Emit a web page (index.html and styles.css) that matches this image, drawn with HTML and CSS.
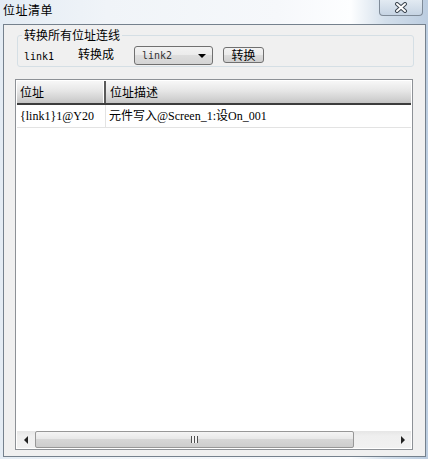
FILE: index.html
```html
<!DOCTYPE html>
<html lang="zh">
<head>
    <meta charset="UTF-8">
    <title>位址清单</title>
    <link rel="stylesheet" href="styles.css">
</head>
<body>
    <div class="window">
        <div class="titlebar">
            <span class="title">位址清单</span>
            <span class="close">
                <svg width="14" height="11" viewBox="0 0 14 11">
                    <path d="M3 2 L11 9 M11 2 L3 9" stroke="#3c4650" stroke-width="4" stroke-linecap="round"/>
                    <path d="M3 2 L11 9 M11 2 L3 9" stroke="#ffffff" stroke-width="2" stroke-linecap="round"/>
                </svg>
            </span>
        </div>
        <div class="frame">
            <fieldset class="group">
                <legend>转换所有位址连线</legend>
                <div class="convert">
                    <span class="from">link1</span>
                    <span class="to-label">转换成</span>
                    <div class="select">
                        <span class="select-text">link2</span>
                        <span class="select-arrow"></span>
                    </div>
                    <button class="btn">转换</button>
                </div>
            </fieldset>
            <div class="list">
                <div class="head">
                    <div class="hcol c1">位址</div>
                    <div class="hcol c2">位址描述</div>
                </div>
                <div class="row">
                    <div class="cell c1">{link1}1@Y20</div>
                    <div class="cell c2">元件写入@Screen_1:设On_001</div>
                </div>
                <div class="fill"></div>
                <div class="hscroll">
                    <span class="sbtn"><span class="tri-left"></span></span>
                    <div class="thumb"><span class="grip"></span></div>
                    <div class="track"></div>
                    <span class="sbtn"><span class="tri-right"></span></span>
                </div>
            </div>
        </div>
    </div>
</body>
</html>
```

FILE: styles.css
```css
* {
    box-sizing: border-box;
}
body {
    margin: 0;
    font-family: "Noto Sans CJK SC", "Liberation Sans", sans-serif;
    font-size: 12px;
    color: #000;
}
.window {
    width: 428px;
    height: 459px;
    overflow: hidden;
    background: linear-gradient(to right, #e4ecf4 0%, #f0f4f8 25%, #f6f8fb 65%, #fdfeff 82%, #d3dfeb 90%, #bccde0 100%);
}
.titlebar {
    height: 24px;
    display: flex;
    justify-content: space-between;
    align-items: flex-start;
    padding-left: 3px;
}
.title {
    font-size: 12px;
    line-height: 20px;
    letter-spacing: 0.5px;
}
.close {
    width: 44px;
    height: 16px;
    margin-right: 5px;
    border: 1px solid #7f8b98;
    border-top: none;
    border-radius: 0 0 4px 4px;
    background: linear-gradient(#e2eaf2, #c6d4e3);
    display: flex;
    align-items: center;
    justify-content: center;
}
.frame {
    margin: 0 2px 0 3px;
    height: 433px;
    border: 1px solid #75818d;
    background: #f0f0f0;
    padding-top: 3px;
}
.group {
    margin: 0 11px 0 13px;
    padding: 0 0 0 6px;
    height: 39px;
    border: 1px solid #d5dfe5;
    border-radius: 3px;
}
.group legend {
    padding: 0 2px;
    margin-left: -2px;
    line-height: 14px;
    font-size: 12px;
}
.convert {
    display: flex;
    align-items: center;
    height: 20px;
    margin-top: 3px;
}
.from {
    width: 54px;
    font-family: "DejaVu Sans Mono", monospace;
    font-size: 10px;
    padding-top: 3px;
}
.to-label {
    width: 56px;
    padding-bottom: 3px;
}
.select {
    width: 79px;
    height: 19px;
    border: 1px solid #707070;
    border-radius: 3px;
    background: linear-gradient(#f2f2f2, #ebebeb 50%, #dddddd 50%, #d4d4d4);
    display: flex;
    align-items: center;
    justify-content: space-between;
    padding: 0 6px 0 7px;
}
.select-text {
    font-family: "DejaVu Sans Mono", monospace;
    font-size: 10px;
    color: #333;
}
.select-arrow {
    width: 0;
    height: 0;
    border-left: 4px solid transparent;
    border-right: 4px solid transparent;
    border-top: 4px solid #000;
    margin-top: 2px;
}
.btn {
    margin-left: 10px;
    width: 41px;
    height: 16px;
    padding: 0;
    border: 1px solid #707070;
    border-radius: 3px;
    background: linear-gradient(#f2f2f2, #ebebeb 50%, #dddddd 50%, #cfcfcf);
    font-family: "Noto Sans CJK SC", sans-serif;
    font-size: 12px;
    line-height: 14px;
    color: #000;
}
.list {
    margin: 12px 12px 0 11px;
    height: 371px;
    border: 1px solid #8d9196;
    background: #fff;
    display: flex;
    flex-direction: column;
    padding: 1px;
}
.head {
    display: flex;
    height: 24px;
    border-bottom: 2px solid #3c3c3c;
    background: linear-gradient(#f7f7f7, #e6e6e6 45%, #cfcfcf 85%, #c4c4c4);
}
.hcol {
    line-height: 21px;
    padding-left: 3px;
}
.c1 {
    width: 89px;
    border-right: 1px solid #555;
    box-shadow: inset -1px 0 #fff;
}
.hcol.c1 {
    border-right: 2px solid #5a5a5a;
}
.c2 {
    flex: 1;
    padding-left: 4px;
}
.row {
    display: flex;
    height: 23px;
    border-bottom: 1px solid #e3e3e3;
}
.cell {
    line-height: 22px;
    font-family: "Liberation Serif", "Noto Sans CJK SC", serif;
    font-size: 12px;
    padding-left: 3px;
}
.cell.c1 {
    border-right: 1px solid #e3e3e3;
    box-shadow: none;
}
.cell.c2 {
    padding-left: 3px;
}
.fill {
    flex: 1;
}
.hscroll {
    height: 17px;
    display: flex;
    background: linear-gradient(#e6e6e6, #efefef 30%, #f1f1f1);
}
.sbtn {
    width: 17px;
    display: flex;
    align-items: center;
    justify-content: center;
}
.tri-left {
    width: 0;
    height: 0;
    border-top: 4px solid transparent;
    border-bottom: 4px solid transparent;
    border-right: 4px solid #222;
}
.tri-right {
    width: 0;
    height: 0;
    border-top: 4px solid transparent;
    border-bottom: 4px solid transparent;
    border-left: 4px solid #222;
}
.thumb {
    width: 319px;
    margin-left: 1px;
    border: 1px solid #979797;
    border-radius: 2px;
    background: linear-gradient(#f4f4f4, #e8e8e8 45%, #d6d6d6 50%, #cdcdcd);
    display: flex;
    align-items: center;
    justify-content: center;
}
.grip {
    width: 7px;
    height: 7px;
    background: repeating-linear-gradient(to right, #4e4e4e 0 1px, #f4f4f4 1px 3px);
}
.track {
    flex: 1;
}
```
